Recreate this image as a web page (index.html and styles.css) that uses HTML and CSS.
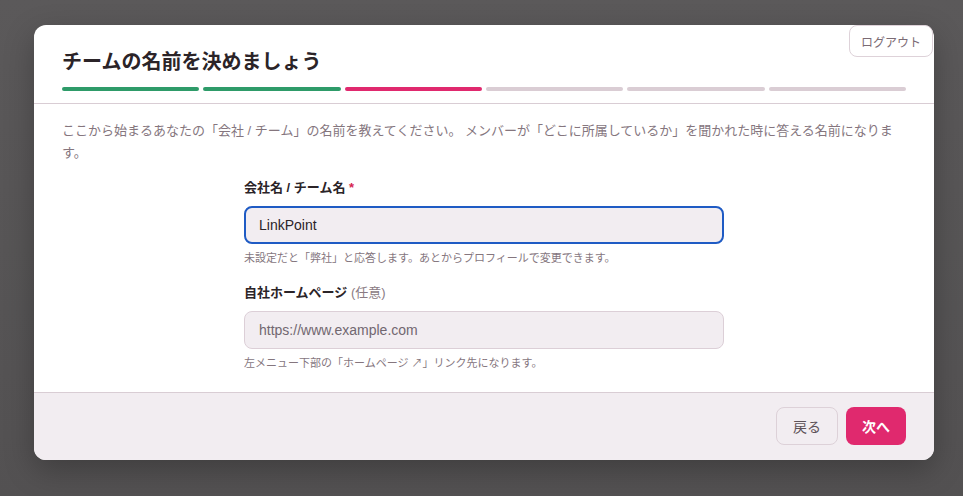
FILE: index.html
```html
<!DOCTYPE html>
<html lang="ja">
<head>
    <meta charset="UTF-8">
    <meta name="viewport" content="width=device-width, initial-scale=1.0">
    <title>チームの名前を決めましょう</title>
    <link rel="stylesheet" href="styles.css">
</head>
<body>
    <button class="logout">ログアウト</button>

    <div class="modal">
        <!-- Header with step progress -->
        <div class="modal-header">
            <h1 class="title">チームの名前を決めましょう</h1>
            <div class="steps">
                <span class="step done"></span>
                <span class="step done"></span>
                <span class="step current"></span>
                <span class="step"></span>
                <span class="step"></span>
                <span class="step"></span>
            </div>
        </div>

        <div class="modal-body">
            <p class="lead">ここから始まるあなたの「会社 / チーム」の名前を教えてください。 メンバーが「どこに所属しているか」を聞かれた時に答える名前になります。</p>

            <div class="form">
                <div class="field">
                    <label class="label" for="teamName">会社名 / チーム名 <span class="required">*</span></label>
                    <input class="input focused" type="text" id="teamName" value="LinkPoint">
                    <p class="hint">未設定だと「弊社」と応答します。あとからプロフィールで変更できます。</p>
                </div>
                <div class="field">
                    <label class="label" for="homepage">自社ホームページ <span class="optional">(任意)</span></label>
                    <input class="input" type="text" id="homepage" placeholder="https://www.example.com">
                    <p class="hint">左メニュー下部の「ホームページ ↗」リンク先になります。</p>
                </div>
            </div>
        </div>

        <div class="modal-footer">
            <button class="btn btn-back">戻る</button>
            <button class="btn btn-next">次へ</button>
        </div>
    </div>
</body>
</html>
```

FILE: styles.css
```css
body {
    margin: 0;
    height: 496px;
    overflow: hidden;
    background: linear-gradient(180deg, #5b595a 0%, #535152 100%);
    font-family: "Liberation Sans", "Noto Sans CJK JP", sans-serif;
    color: #2b2428;
    padding-top: 25px;
    box-sizing: border-box;
}
.logout {
    position: absolute;
    top: 25px;
    right: 30px;
    height: 32px;
    padding: 0 11px;
    background: #fff;
    border: 1px solid #ded2d9;
    border-radius: 8px;
    color: #7b6b74;
    font-family: "Noto Sans CJK JP", sans-serif;
    font-size: 12px;
    z-index: 2;
}
.modal {
    width: 900px;
    margin-left: 34px;
    background: #fff;
    border-radius: 12px;
    overflow: hidden;
    box-shadow: 0 10px 30px rgba(0, 0, 0, 0.25);
}
.modal-header {
    padding: 22px 28px 12px;
    border-bottom: 1px solid #d9cdd4;
}
.title {
    margin: 0;
    font-size: 20px;
    line-height: 28px;
    font-weight: bold;
    font-family: "Noto Sans CJK JP", sans-serif;
    color: #2b2428;
}
.steps {
    display: flex;
    gap: 4px;
    margin-top: 12px;
}
.step {
    flex: 1;
    height: 4px;
    border-radius: 2px;
    background: #dacdd4;
}
.step.done {
    background: #2e9b69;
}
.step.current {
    background: #e0296e;
}
.modal-body {
    padding: 16px 28px 21px;
}
.lead {
    margin: 0;
    font-size: 13px;
    line-height: 22px;
    color: #85767e;
}
.form {
    width: 480px;
    margin: 14px auto 0;
}
.field + .field {
    margin-top: 17px;
}
.label {
    display: block;
    font-size: 13px;
    line-height: 20px;
    font-weight: bold;
    color: #2b2428;
    margin-bottom: 8px;
}
.required {
    color: #d6254f;
}
.optional {
    font-weight: normal;
    color: #8a7b83;
}
.input {
    display: block;
    box-sizing: border-box;
    width: 100%;
    height: 38px;
    padding: 0 14px;
    background: #f2edf1;
    border: 1px solid #dccfd7;
    border-radius: 8px;
    font-family: "Liberation Sans", "Noto Sans CJK JP", sans-serif;
    font-size: 14px;
    color: #2b2428;
    outline: none;
}
.input::placeholder {
    color: #716770;
}
.input.focused {
    border: 2px solid #1f5bc4;
    padding: 0 13px;
}
.hint {
    margin: 6px 0 0;
    font-size: 11px;
    line-height: 16px;
    color: #85767e;
}
.modal-footer {
    display: flex;
    justify-content: flex-end;
    gap: 8px;
    padding: 14px 28px 15px;
    background: #f2edf1;
    border-top: 1px solid #d9cdd4;
}
.btn {
    height: 38px;
    border-radius: 8px;
    font-family: "Noto Sans CJK JP", sans-serif;
    font-size: 14px;
    cursor: pointer;
}
.btn-back {
    width: 62px;
    background: #f2edf1;
    border: 1px solid #ddd1d8;
    color: #5d5258;
}
.btn-next {
    width: 60px;
    background: #e0296e;
    border: none;
    color: #fff;
    font-weight: bold;
}
```
